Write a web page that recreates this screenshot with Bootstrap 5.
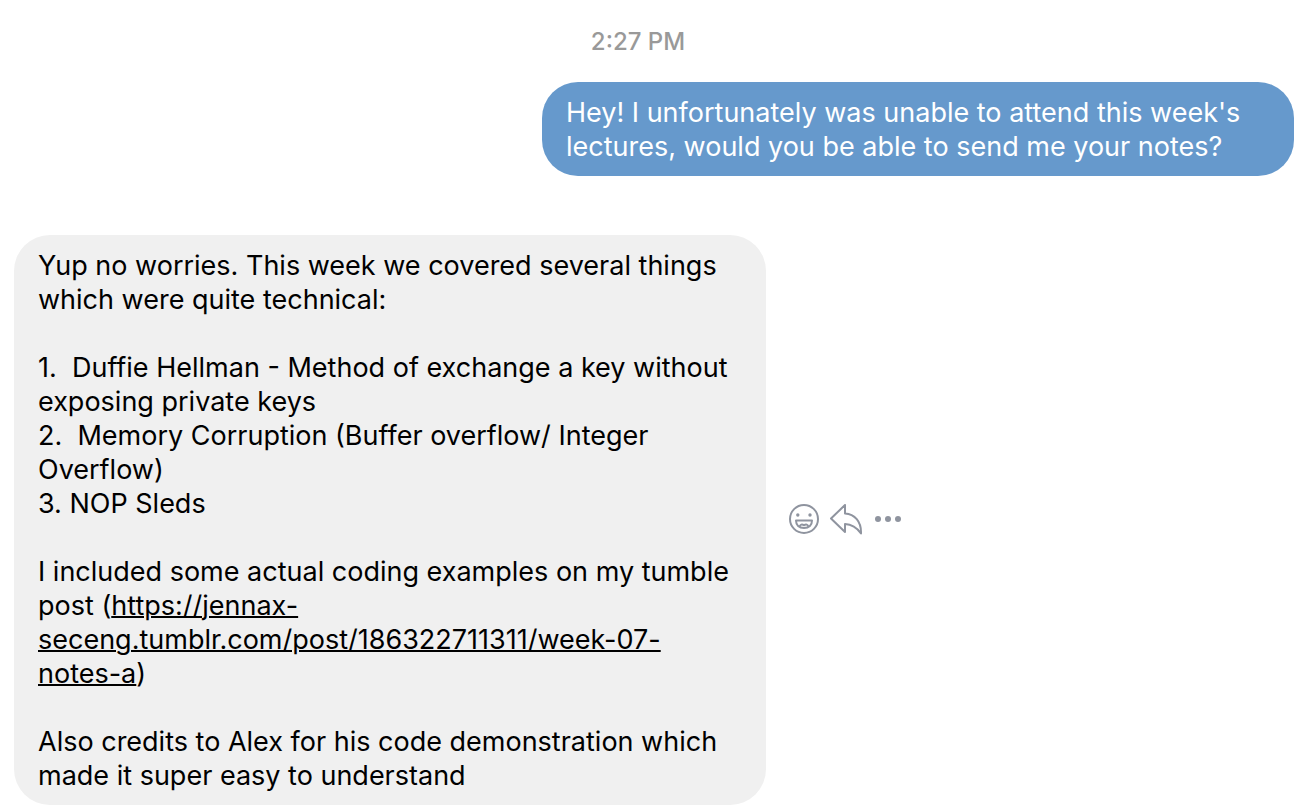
<!DOCTYPE html>
<html lang="en">
<head>
<meta charset="utf-8">
<meta name="viewport" content="width=device-width, initial-scale=1">
<title>Messages</title>
<link href="https://cdn.jsdelivr.net/npm/bootstrap@5.3.0/dist/css/bootstrap.min.css" rel="stylesheet">
<style>
body { font-family: Inter, "Liberation Sans", sans-serif; font-size: 27px; line-height: 34px; color: #000; background: #fff; }
.chat { padding: 24px 10px 7px 14px; }
.stamp { font-size: 24px; font-weight: 500; line-height: 36px; color: #999; margin-bottom: 22px; padding-right: 32px; }
.bubble { width: 58.75%; border-radius: 36px; padding: 14px 24px 12px; }
.sent { background: #6699cc; color: #fff; margin-bottom: 59px; }
.received { background: #f0f0f0; }
.received p { margin-bottom: 34px; white-space: pre-wrap; }
.received a { color: inherit; text-decoration-thickness: 2px; }
.tools { margin-left: 22px; }
.tool { color: #8f949f; background: none; border: 0; padding: 0; line-height: 0; }
</style>
</head>
<body>
<main class="chat d-flex flex-column">
  <time class="stamp text-center">2:27 PM</time>
  <div class="bubble sent align-self-end">Hey! I unfortunately was unable to attend this week's lectures, would you be able to send me your notes?</div>
  <div class="d-flex align-items-center">
    <div class="bubble received">
      <p>Yup no worries. This week we covered several things which were quite technical:</p>
      <p>1.  Duffie Hellman - Method of exchange a key without exposing private keys
2.  Memory Corruption (Buffer overflow/ Integer Overflow)
3. NOP Sleds</p>
      <p>I included some actual coding examples on my tumble post (<a href="https://jennax-seceng.tumblr.com/post/186322711311/week-07-notes-a">https://jennax-seceng.tumblr.com/post/186322711311/week-07-notes-a</a>)</p>
      <p class="mb-0">Also credits to Alex for his code demonstration which made it super easy to understand</p>
    </div>
    <div class="tools d-flex gap-2">
      <button type="button" class="tool" aria-label="React">
        <svg width="32" height="32" viewBox="0 0 32 32" fill="none" stroke="currentColor" stroke-width="2">
          <circle cx="16" cy="15" r="14"/>
          <circle cx="9.8" cy="11" r="1.7" fill="currentColor" stroke="none"/>
          <circle cx="22" cy="11" r="1.7" fill="currentColor" stroke="none"/>
          <path d="M8 16.500h16c0 4.500-3 7.500-8 7.500s-8-3-8-7.500zM11.500 22.800c.8-2.400 2.500-3 4.500-1.500 2-1.500 3.700-.9 4.500 1.500" stroke-linejoin="round"/>
        </svg>
      </button>
      <button type="button" class="tool" aria-label="Reply">
        <svg width="36" height="32" viewBox="0 0 36 32" fill="none" stroke="currentColor" stroke-width="2" stroke-linejoin="round">
          <path d="M3 14.500 17 1v8.500c9.500.5 16.500 8 16 20C28.500 23 23.500 20.200 17 20v8z"/>
        </svg>
      </button>
      <button type="button" class="tool" aria-label="More">
        <svg width="32" height="32" viewBox="0 0 32 32" fill="currentColor">
          <circle cx="6" cy="15" r="3"/><circle cx="16" cy="15" r="3"/><circle cx="26" cy="15" r="3"/>
        </svg>
      </button>
    </div>
  </div>
</main>
<script src="https://cdn.jsdelivr.net/npm/bootstrap@5.3.0/dist/js/bootstrap.bundle.min.js"></script>
</body>
</html>
